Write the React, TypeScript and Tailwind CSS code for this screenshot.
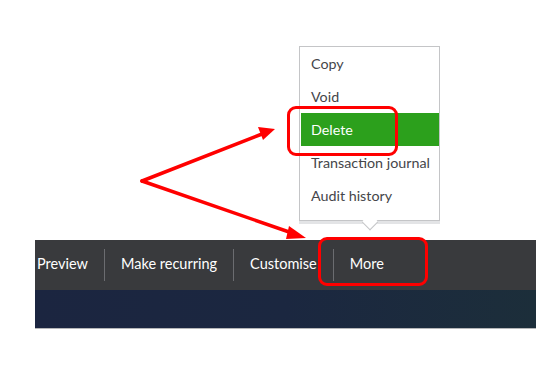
const menuItems = ['Copy', 'Void', 'Delete', 'Transaction journal', 'Audit history'];
const barItems = ['Preview', 'Make recurring', 'Customise', 'More'];

export default function App() {
  return (
    <div className="relative w-[536px] h-[378px] bg-white overflow-hidden font-['Lato',sans-serif]">
      {/* toolbar + header strip */}
      <div className="pt-[240px] pl-[35px]">
        <div className="flex h-[50px] items-center bg-[#393a3d] text-white text-[14.5px] pb-[3px]">
          {barItems.map((label, i) => (
            <div key={label} className="flex items-center h-full">
              {i > 0 && <div className="w-px h-[32px] bg-[#6b6c70] mt-[3px]" />}
              <span className={i === 0 ? 'pl-[2px] pr-[16px]' : 'px-[16px]'}>{label}</span>
            </div>
          ))}
        </div>
        <div className="h-[39px] bg-gradient-to-r from-[#1b2540] via-[#1b2740] to-[#1c2e3a] border-b border-[#b5b6b8]" />
      </div>

      {/* dropdown menu */}
      <div className="absolute left-[299px] top-[46px] w-[141px] bg-white border border-[#c4c5c7] shadow-[0_3px_0_#e3e4e6] pb-[8px] text-[14.3px] text-[#45464a]">
        {menuItems.map((label) => (
          <div
            key={label}
            className={
              'h-[33px] flex items-center pl-[10px] ml-[1px] ' +
              (label === 'Delete' ? 'bg-[#2ca01c] text-white' : '')
            }
          >
            {label}
          </div>
        ))}
        <div className="absolute left-[64px] -bottom-[8px] w-[12px] h-[12px] bg-white border-r border-b border-[#c4c5c7] rotate-45" />
      </div>

      {/* red highlight boxes */}
      <div className="absolute left-[287px] top-[106px] w-[111px] h-[50px] border-[3px] border-[#f00] rounded-[9px]" />
      <div className="absolute left-[318px] top-[237px] w-[110px] h-[49px] border-[3px] border-[#f00] rounded-[9px]" />

      {/* arrows */}
      <svg className="absolute inset-0" width="536" height="378" viewBox="0 0 536 378">
        <g stroke="#f00" strokeWidth="3.5" strokeLinecap="round" fill="none">
          <line x1="142" y1="181" x2="262" y2="134" />
          <line x1="142" y1="181" x2="292" y2="233" />
        </g>
        <polygon points="275,129 258,127 263,140" fill="#f00" />
        <polygon points="306,238 289,226 286,239" fill="#f00" />
      </svg>
    </div>
  );
}
